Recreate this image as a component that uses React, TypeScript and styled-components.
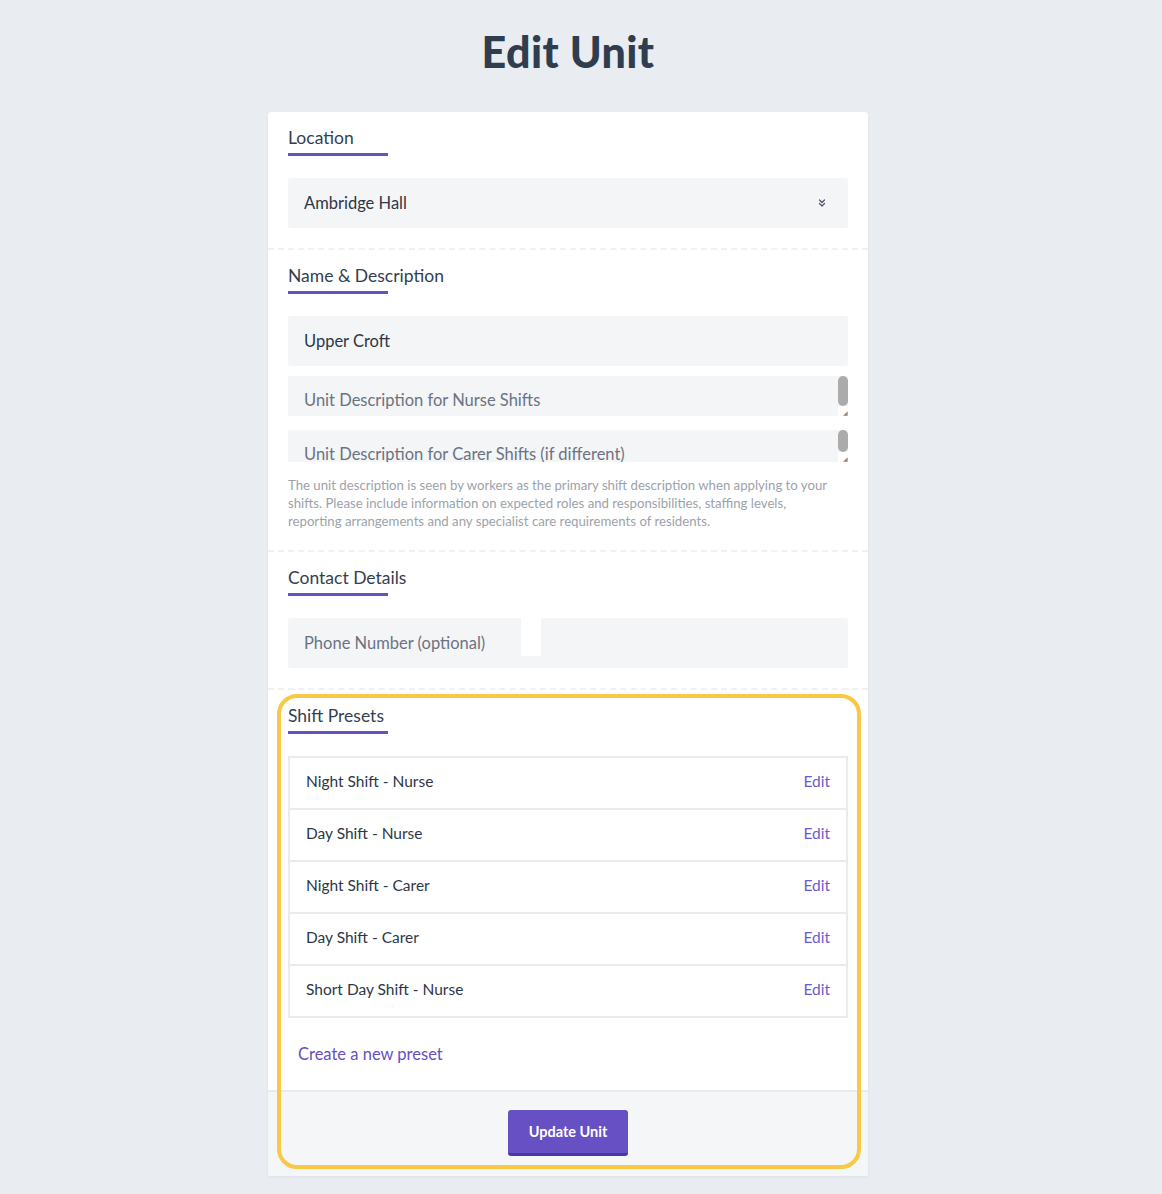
import styled, { createGlobalStyle } from "styled-components";
import { ChevronsDown } from "lucide-react";

const GlobalStyle = createGlobalStyle`
  body {
    margin: 0;
    background: #e9ecf0;
    font-family: Lato, "Noto Sans", "Liberation Sans", sans-serif;
    color: #2d3748;
  }
`;

const Page = styled.div`
  padding: 27px 26px 18px 0;
`;

const Title = styled.h1`
  margin: 0 0 35px;
  text-align: center;
  font-size: 43px;
  line-height: 50px;
  font-weight: 900;
  color: #2f3d4f;
  letter-spacing: 0.4px;
`;

const Card = styled.div`
  position: relative;
  width: 600px;
  margin: 0 auto;
  background: #fff;
  border-radius: 3px;
  box-shadow: 0 1px 3px rgba(30, 40, 60, 0.06);
  overflow: hidden;
`;

const Section = styled.section`
  padding: 14px 20px 20px;
  border-bottom: 2px dashed #f0f1f4;

  &.last {
    border-bottom: none;
    padding-bottom: 24px;
  }
`;

const SectionHeader = styled.h3`
  margin: 0 0 22px;
  font-size: 17.5px;
  line-height: 24px;
  font-weight: 400;
  color: #333f50;

  &:after {
    content: "";
    display: block;
    width: 100px;
    height: 3px;
    margin-top: 3px;
    background: #6650c4;
  }
`;

const Field = styled.div`
  display: flex;
  align-items: center;
  justify-content: space-between;
  height: 50px;
  padding: 0 20px 0 16px;
  background: #f4f5f7;
  border-radius: 3px;
  font-size: 16.5px;
  color: #2d3748;
  margin-bottom: 10px;

  &:last-child {
    margin-bottom: 0;
  }
`;

const TextArea = styled.div<{ $h: number }>`
  display: flex;
  height: ${(p) => p.$h}px;
  margin-bottom: 14px;
  background: #f4f5f7;
  overflow: hidden;
`;

const TextAreaBody = styled.div`
  flex: 1;
  padding: 15px 16px 0;
  font-size: 16.5px;
  line-height: 18px;
  color: #6b7383;
`;

const ScrollTrack = styled.div`
  width: 10px;
  display: flex;
  flex-direction: column;
  background: #f4f5f7;
`;

const Thumb = styled.div`
  flex: 1;
  background: #ababab;
  border-radius: 5px;
`;

const Grip = styled.div`
  height: 10px;
  background: #fff;
  display: flex;
  align-items: flex-end;
  justify-content: flex-end;
  color: #8a8a8a;
  font-size: 6px;
  line-height: 7px;
`;

const Help = styled.p`
  margin: 0;
  max-width: 548px;
  font-size: 13.2px;
  line-height: 18px;
  color: #9ca2ab;
`;

const PhoneRow = styled.div`
  display: flex;
  height: 50px;
  background: #f4f5f7;
  border-radius: 3px;
`;

const PhoneField = styled.div`
  width: 233px;
  padding-left: 16px;
  box-sizing: border-box;
  display: flex;
  align-items: center;
  font-size: 16.5px;
  color: #6b7383;
`;

const Notch = styled.div`
  width: 20px;
  height: 38px;
  background: #fff;
`;

const List = styled.ul`
  margin: 0;
  padding: 0;
  list-style: none;
  border: 2px solid #e9ecef;
`;

const Row = styled.li`
  display: flex;
  align-items: center;
  justify-content: space-between;
  height: 50px;
  padding: 0 16px 4px;
  box-sizing: border-box;
  font-size: 15.5px;
  color: #2d3748;

  & + & {
    border-top: 2px solid #e9ecef;
    height: 52px;
  }
`;

const EditLink = styled.a`
  color: #6b5bd2;
  font-size: 15.5px;
  text-decoration: none;
  cursor: pointer;
`;

const CreateLink = styled.a`
  display: block;
  margin: 24px 0 0 10px;
  font-size: 16.5px;
  line-height: 24px;
  color: #6650c4;
  cursor: pointer;
`;

const Footer = styled.div`
  display: flex;
  justify-content: center;
  padding: 18px 0 20px;
  background: #f5f6f8;
  border-top: 2px solid #e9ecef;
`;

const Button = styled.button`
  width: 120px;
  height: 46px;
  border: none;
  border-bottom: 3px solid #4a37a8;
  border-radius: 3px;
  background: #6650c4;
  color: #fff;
  font-family: inherit;
  font-size: 14.5px;
  font-weight: 700;
  cursor: pointer;
`;

const Highlight = styled.div`
  position: absolute;
  left: 9px;
  right: 7px;
  top: 582px;
  bottom: 7px;
  border: 4px solid #f8c846;
  border-radius: 20px;
  pointer-events: none;
`;

const presets = [
  "Night Shift - Nurse",
  "Day Shift - Nurse",
  "Night Shift - Carer",
  "Day Shift - Carer",
  "Short Day Shift - Nurse",
];

export default function App() {
  return (
    <Page>
      <GlobalStyle />
      <Title>Edit Unit</Title>
      <Card>
        <Section>
          <SectionHeader>Location</SectionHeader>
          <Field>
            Ambridge Hall
            <ChevronsDown size={12} strokeWidth={2.4} color="#4a5568" />
          </Field>
        </Section>

        <Section>
          <SectionHeader>Name &amp; Description</SectionHeader>
          <Field>Upper Croft</Field>
          <TextArea $h={40}>
            <TextAreaBody>Unit Description for Nurse Shifts</TextAreaBody>
            <ScrollTrack>
              <Thumb />
              <Grip>◢</Grip>
            </ScrollTrack>
          </TextArea>
          <TextArea $h={32}>
            <TextAreaBody>Unit Description for Carer Shifts (if different)</TextAreaBody>
            <ScrollTrack>
              <Thumb />
              <Grip>◢</Grip>
            </ScrollTrack>
          </TextArea>
          <Help>
            The unit description is seen by workers as the primary shift description when applying to your
            shifts. Please include information on expected roles and responsibilities, staffing levels,
            reporting arrangements and any specialist care requirements of residents.
          </Help>
        </Section>

        <Section>
          <SectionHeader>Contact Details</SectionHeader>
          <PhoneRow>
            <PhoneField>Phone Number (optional)</PhoneField>
            <Notch />
          </PhoneRow>
        </Section>

        <Section className="last">
          <SectionHeader>Shift Presets</SectionHeader>
          <List>
            {presets.map((p) => (
              <Row key={p}>
                {p}
                <EditLink>Edit</EditLink>
              </Row>
            ))}
          </List>
          <CreateLink>Create a new preset</CreateLink>
        </Section>

        <Footer>
          <Button>Update Unit</Button>
        </Footer>

        <Highlight />
      </Card>
    </Page>
  );
}
